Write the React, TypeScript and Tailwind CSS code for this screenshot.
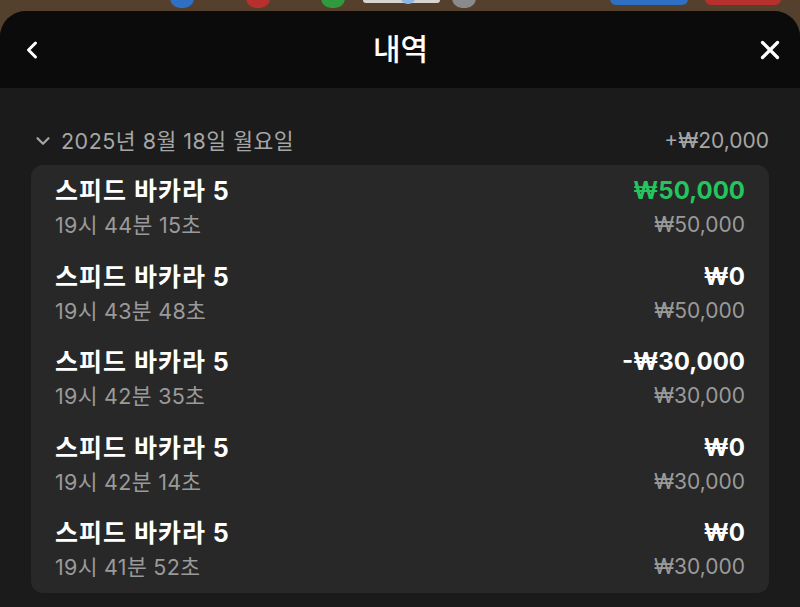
import { ChevronDown, ChevronLeft, X } from "lucide-react";

type Row = { title: string; time: string; amount: string; balance: string; win?: boolean };

const rows: Row[] = [
  { title: "스피드 바카라 5", time: "19시 44분 15초", amount: "₩50,000", balance: "₩50,000", win: true },
  { title: "스피드 바카라 5", time: "19시 43분 48초", amount: "₩0", balance: "₩50,000" },
  { title: "스피드 바카라 5", time: "19시 42분 35초", amount: "-₩30,000", balance: "₩30,000" },
  { title: "스피드 바카라 5", time: "19시 42분 14초", amount: "₩0", balance: "₩30,000" },
  { title: "스피드 바카라 5", time: "19시 41분 52초", amount: "₩0", balance: "₩30,000" },
];

export default function App() {
  return (
    <div
      className="w-[800px] h-[607px] overflow-hidden bg-[#54402c] flex flex-col"
      style={{ fontFamily: 'Inter, "Noto Sans CJK KR", sans-serif' }}
    >
      {/* home screen behind the sheet */}
      <div className="h-[11px] relative shrink-0">
        <span className="absolute left-[170px] -top-[12px] w-[24px] h-[20px] rounded-full bg-[#2f6fc4]" />
        <span className="absolute left-[246px] -top-[12px] w-[24px] h-[20px] rounded-full bg-[#b8302e]" />
        <span className="absolute left-[321px] -top-[12px] w-[24px] h-[20px] rounded-full bg-[#2f9a3e]" />
        <span className="absolute left-[363px] -top-[10px] w-[77px] h-[13px] rounded-[3px] bg-[#d8d4cf]" />
        <span className="absolute left-[400px] -top-[12px] w-[16px] h-[16px] rounded-full bg-[#8fb8e8]" />
        <span className="absolute left-[452px] -top-[12px] w-[24px] h-[20px] rounded-full bg-[#8a8a8c]" />
        <span className="absolute left-[610px] -top-[10px] w-[78px] h-[15px] rounded-[6px] bg-[#2f6fc4]" />
        <span className="absolute left-[705px] -top-[10px] w-[76px] h-[15px] rounded-[6px] bg-[#b8302e]" />
      </div>

      <div className="flex-1 rounded-t-[26px] overflow-hidden bg-[#1b1b1b] flex flex-col">
        {/* header */}
        <div className="h-[77px] bg-[#0b0b0b] flex items-center justify-between px-[18px] shrink-0">
          <ChevronLeft className="w-[28px] h-[28px] text-white" strokeWidth={2.6} />
          <div className="text-white text-[30px] font-medium">내역</div>
          <X className="w-[30px] h-[30px] text-white -mr-[3px]" strokeWidth={2.6} />
        </div>

        {/* body */}
        <div className="px-[31px] pt-[40px]">
          <div className="flex items-center justify-between h-[26px] text-[#a6a6a6]">
            <div className="flex items-center gap-[7px]">
              <ChevronDown className="w-[22px] h-[22px] ml-[1px]" strokeWidth={2.4} />
              <span className="text-[21.5px] tracking-[0.5px]">2025년 8월 18일 월요일</span>
            </div>
            <span className="text-[21px]">+₩20,000</span>
          </div>

          <div className="mt-[11px] bg-[#282828] rounded-[12px] px-[24px]">
            {rows.map((r, i) => (
              <div key={i} className="h-[85.5px] py-[9px] flex justify-between">
                <div className="flex flex-col">
                  <span className="h-[34px] leading-[34px] text-white text-[25px] tracking-[1px] font-bold">
                    {r.title}
                  </span>
                  <span className="h-[34px] leading-[34px] text-[#9a9a9a] text-[21.5px] tracking-[0.3px]">
                    {r.time}
                  </span>
                </div>
                <div className="flex flex-col items-end">
                  <span
                    className={`h-[34px] leading-[34px] text-[24px] font-bold ${
                      r.win ? "text-[#25c45f]" : "text-white"
                    }`}
                  >
                    {r.amount}
                  </span>
                  <span className="h-[34px] leading-[34px] text-[#9a9a9a] text-[21px]">{r.balance}</span>
                </div>
              </div>
            ))}
          </div>
        </div>
      </div>
    </div>
  );
}
